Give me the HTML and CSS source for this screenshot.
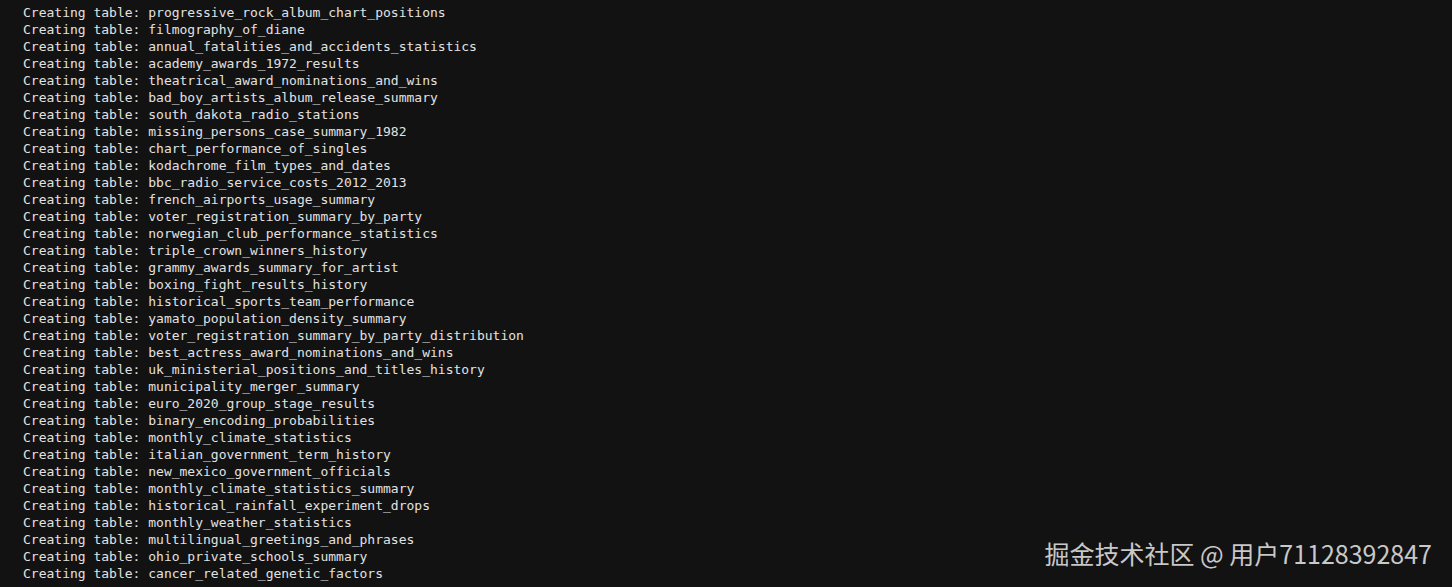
FILE: index.html
```html
<!DOCTYPE html>
<html>
<head>
<meta charset="utf-8">
<link rel="stylesheet" href="styles.css">
</head>
<body>
<div class="terminal">
<div class="line">Creating table: progressive_rock_album_chart_positions</div>
<div class="line">Creating table: filmography_of_diane</div>
<div class="line">Creating table: annual_fatalities_and_accidents_statistics</div>
<div class="line">Creating table: academy_awards_1972_results</div>
<div class="line">Creating table: theatrical_award_nominations_and_wins</div>
<div class="line">Creating table: bad_boy_artists_album_release_summary</div>
<div class="line">Creating table: south_dakota_radio_stations</div>
<div class="line">Creating table: missing_persons_case_summary_1982</div>
<div class="line">Creating table: chart_performance_of_singles</div>
<div class="line">Creating table: kodachrome_film_types_and_dates</div>
<div class="line">Creating table: bbc_radio_service_costs_2012_2013</div>
<div class="line">Creating table: french_airports_usage_summary</div>
<div class="line">Creating table: voter_registration_summary_by_party</div>
<div class="line">Creating table: norwegian_club_performance_statistics</div>
<div class="line">Creating table: triple_crown_winners_history</div>
<div class="line">Creating table: grammy_awards_summary_for_artist</div>
<div class="line">Creating table: boxing_fight_results_history</div>
<div class="line">Creating table: historical_sports_team_performance</div>
<div class="line">Creating table: yamato_population_density_summary</div>
<div class="line">Creating table: voter_registration_summary_by_party_distribution</div>
<div class="line">Creating table: best_actress_award_nominations_and_wins</div>
<div class="line">Creating table: uk_ministerial_positions_and_titles_history</div>
<div class="line">Creating table: municipality_merger_summary</div>
<div class="line">Creating table: euro_2020_group_stage_results</div>
<div class="line">Creating table: binary_encoding_probabilities</div>
<div class="line">Creating table: monthly_climate_statistics</div>
<div class="line">Creating table: italian_government_term_history</div>
<div class="line">Creating table: new_mexico_government_officials</div>
<div class="line">Creating table: monthly_climate_statistics_summary</div>
<div class="line">Creating table: historical_rainfall_experiment_drops</div>
<div class="line">Creating table: monthly_weather_statistics</div>
<div class="line">Creating table: multilingual_greetings_and_phrases</div>
<div class="line">Creating table: ohio_private_schools_summary</div>
<div class="line">Creating table: cancer_related_genetic_factors</div>
</div>
<div class="watermark">掘金技术社区 @ 用户71128392847</div>
</body>
</html>
```
FILE: styles.css
```css
html, body {
  margin: 0;
  padding: 0;
  background: #121213;
  width: 1452px;
  height: 587px;
  overflow: hidden;
}
body {
  position: relative;
}
.terminal {
  padding: 4px 0 0 23px;
  font-family: "DejaVu Sans Mono", monospace;
  font-size: 13px;
  line-height: 17px;
  color: #e2e2e2;
}
.line {
  white-space: pre;
  height: 17px;
}
.watermark {
  position: absolute;
  right: 20px;
  bottom: 18px;
  font-family: "Noto Sans CJK SC", sans-serif;
  font-size: 25px;
  line-height: 32px;
  color: rgba(235, 235, 235, 0.85);
}
```
